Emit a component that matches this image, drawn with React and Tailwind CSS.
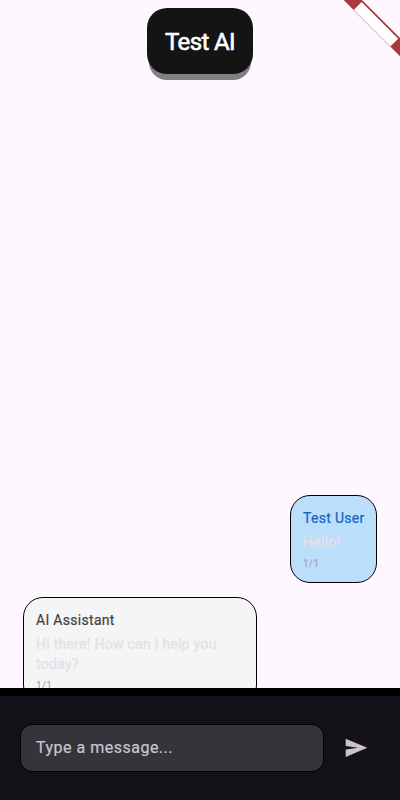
import React from "react";

const font = "font-['Roboto','Liberation_Sans',sans-serif]";

function CornerBanner() {
  return (
    <svg className="absolute right-0 top-0" width="60" height="60" viewBox="0 0 60 60" aria-hidden="true">
      <path d="M3.7 0H22L60 38V56.3Z" fill="#a33c40" />
      <path d="M13.7 10L21.6 2.1L58.2 38.7L50.3 46.6Z" fill="#fff" />
      <path d="M13.5 10L50 46.5" stroke="#dfbcc2" strokeWidth="1" />
      <path d="M22 18l6-6M29 25l6-6M36 32l6-6M44 40l6-6" stroke="#eeeae8" strokeWidth=".6" strokeDasharray="1 1" />
    </svg>
  );
}

function Message({ name, nameClass, text, className }) {
  return (
    <div className={`shrink-0 rounded-[20px] border border-black pl-3 pt-3 ${className}`}>
      <div className={`text-sm font-normal leading-5 [-webkit-text-stroke:0.2px_currentColor] ${nameClass}`}>{name}</div>
      <div className="mt-1 text-sm font-normal leading-5 tracking-[0.27px] text-[#e6e0e9] [-webkit-text-stroke:0.4px_currentColor]">{text}</div>
      <div className="mt-[5px] text-[10px] leading-[14px] tracking-[0.2px] text-[#9e9e9e]">1/1</div>
    </div>
  );
}

export default function App() {
  return (
    <div className={`relative flex h-[800px] w-[400px] flex-col overflow-hidden bg-[#fef7ff] ${font}`}>
      <header className="flex h-[82px] shrink-0 justify-center pt-2">
        <h1 className="flex h-[66px] w-[106px] items-center justify-center rounded-[20px] bg-[#141414] pt-[2px] text-2xl font-normal tracking-[-0.6px] text-white shadow-[0_8px_0_-2px_#827e83] [-webkit-text-stroke:0.6px_currentColor]">
          Test AI
        </h1>
      </header>
      <main className="flex min-h-0 flex-1 flex-col overflow-hidden pl-[23px] pr-[23px] pt-[413px]">
        <Message
          name="Test User"
          text="Hello!"
          className="h-[88px] w-[87px] self-end bg-[#bbdefb]"
          nameClass="tracking-[0.3px] text-[#1565c0]"
        />
        <Message
          name="AI Assistant"
          text="Hi there! How can I help you today?"
          className="mt-[14px] h-[108px] w-[234px] bg-[#f5f5f5] pr-3"
          nameClass="tracking-[0.3px] text-[#424242]"
        />
      </main>
      <footer className="flex h-28 shrink-0 items-center border-t-8 border-black bg-[#141118] pl-5">
        <input
          aria-label="Message"
          placeholder="Type a message..."
          className="h-12 w-[304px] rounded-xl border border-black bg-[#36343b] px-[15px] pb-[2px] text-base tracking-[0.5px] text-[#cac4d0] outline-none [-webkit-text-stroke:0.2px_#cac4d0] placeholder:text-[#cac4d0] placeholder:opacity-100"
        />
        <button aria-label="Send" className="ml-5 flex h-6 w-6 items-center justify-center">
          <svg width="24" height="24" viewBox="0 0 24 24" fill="#cac4d0">
            <path d="M1.7 2.7L23.3 11.8L1.7 21.1V13.6L14 11.8L1.7 10.1Z" />
          </svg>
        </button>
      </footer>
      <CornerBanner />
    </div>
  );
}
